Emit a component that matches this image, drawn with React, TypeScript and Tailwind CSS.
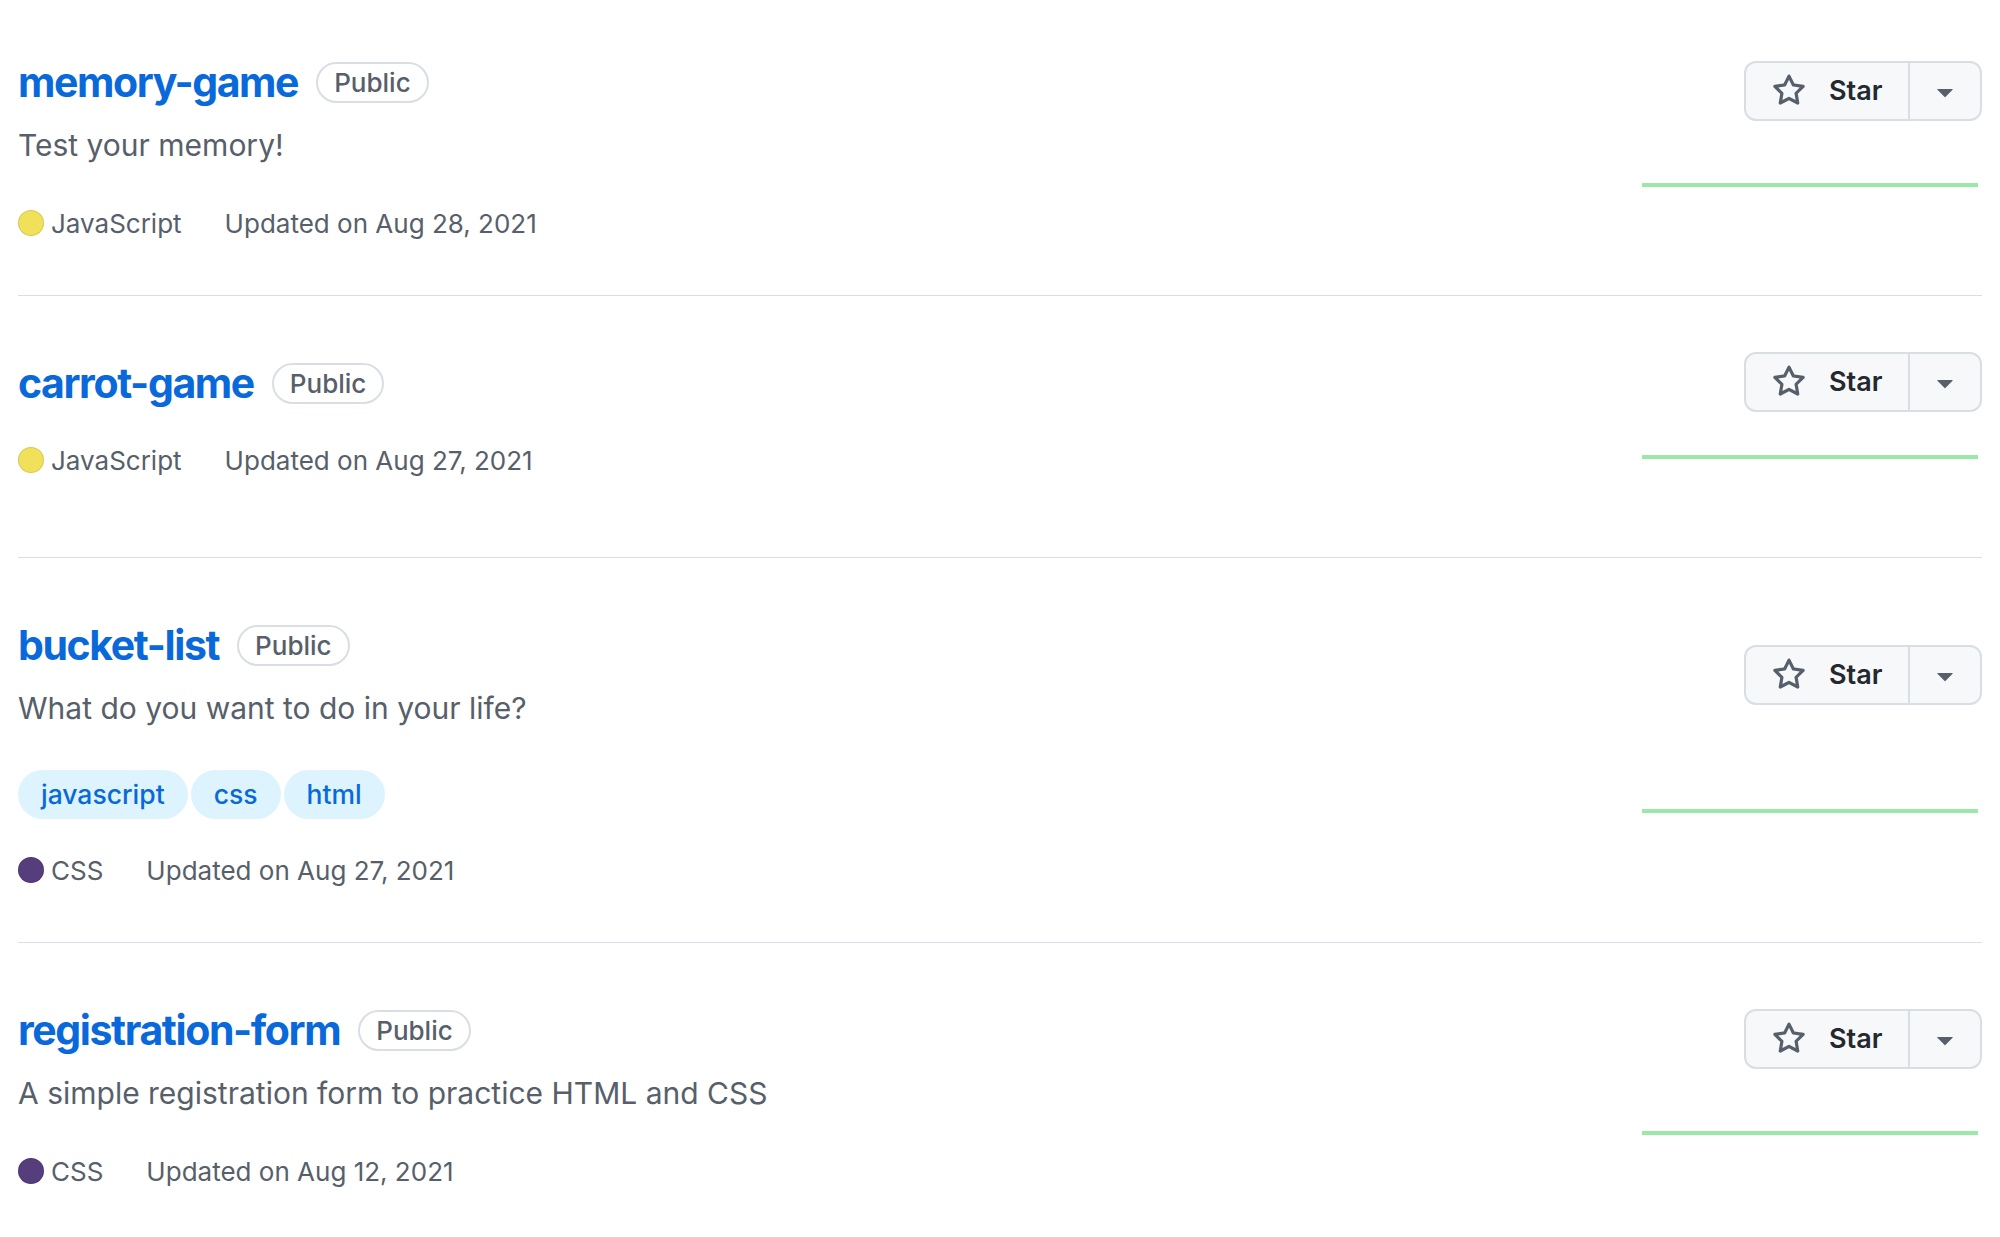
import { ReactNode } from 'react';

type Repo = {
  name: string;
  description?: string;
  topics?: string[];
  language: string;
  langColor: string;
  updated: string;
};

const repos: Repo[] = [
  { name: 'memory-game', description: 'Test your memory!', language: 'JavaScript', langColor: '#f1e05a', updated: 'Aug 28, 2021' },
  { name: 'carrot-game', language: 'JavaScript', langColor: '#f1e05a', updated: 'Aug 27, 2021' },
  { name: 'bucket-list', description: 'What do you want to do in your life?', topics: ['javascript', 'css', 'html'], language: 'CSS', langColor: '#563d7c', updated: 'Aug 27, 2021' },
  { name: 'registration-form', description: 'A simple registration form to practice HTML and CSS', language: 'CSS', langColor: '#563d7c', updated: 'Aug 12, 2021' },
];

function StarIcon() {
  return (
    <svg width="34" height="34" viewBox="0 0 16 16" fill="#57606a">
      <path fillRule="evenodd" d="M8 .25a.75.75 0 01.673.418l1.882 3.815 4.21.612a.75.75 0 01.416 1.279l-3.046 2.97.719 4.192a.75.75 0 01-1.088.791L8 12.347l-3.766 1.98a.75.75 0 01-1.088-.79l.72-4.194L.818 6.374a.75.75 0 01.416-1.28l4.21-.611L7.327.668A.75.75 0 018 .25zm0 2.445L6.615 5.5a.75.75 0 01-.564.41l-3.097.45 2.24 2.184a.75.75 0 01.216.664l-.528 3.084 2.769-1.456a.75.75 0 01.698 0l2.77 1.456-.53-3.084a.75.75 0 01.216-.664l2.24-2.183-3.096-.45a.75.75 0 01-.564-.41L8 2.694v.001z" />
    </svg>
  );
}

function Caret() {
  return (
    <svg width="34" height="34" viewBox="0 0 16 16" fill="#57606a">
      <path d="M4.427 7.427l3.396 3.396a.25.25 0 00.354 0l3.396-3.396A.25.25 0 0011.396 7H4.604a.25.25 0 00-.177.427z" />
    </svg>
  );
}

function Pill({ children }: { children: ReactNode }) {
  return (
    <span className="h-[49px] px-[23px] flex items-center rounded-full bg-[#ddf4ff] text-[#0969da] text-[26.5px] font-medium">{children}</span>
  );
}

function RepoRow({ repo }: { repo: Repo }) {
  return (
    <li className="flex justify-between border-b border-[#d8dee4] py-[52px]">
      <div className="flex flex-col">
        <div className="flex items-center h-[70px]">
          <a className="text-[41px] font-bold text-[#0969da] leading-none tracking-[-1.4px]">{repo.name}</a>
          <span className="ml-[18px] h-[41px] px-[16px] flex items-center rounded-full border-2 border-[#d8dee4] text-[26px] font-medium text-[#57606a]">Public</span>
        </div>
        {repo.description && (
          <p className="mt-[5px] mb-[13px] text-[30px] leading-[46px] text-[#57606a]">{repo.description}</p>
        )}
        {repo.topics && (
          <div className="flex gap-[3px] mt-[26px] mb-[9px]">
            {repo.topics.map((t) => <Pill key={t}>{t}</Pill>)}
          </div>
        )}
        <div className="mt-[22px] h-[40px] flex items-center text-[26px] text-[#57606a]">
          <span className="w-[26px] h-[26px] rounded-full border border-black/10 mr-[7px]" style={{ backgroundColor: repo.langColor }} />
          <span className="mr-[43px]">{repo.language}</span>
          <span>Updated on {repo.updated}</span>
        </div>
      </div>
      <div className="flex flex-col justify-around items-end pt-[4px]">
        <div className="flex h-[60px] rounded-[12px] border-2 border-[#d8dee4] bg-[#f6f8fa] text-[#24292f]">
          <button className="w-[164px] flex items-center pl-[26px] gap-[23px] text-[27px] font-semibold border-r-2 border-[#d8dee4]">
            <StarIcon />
            Star
          </button>
          <button className="w-[70px] flex items-center justify-center">
            <Caret />
          </button>
        </div>
        <div className="h-[93px] pr-[4px]">
          <svg width="336" height="93">
            <line x1="0" y1="45" x2="336" y2="45" stroke="#9be9a8" strokeWidth="4" />
          </svg>
        </div>
      </div>
    </li>
  );
}

export default function App() {
  return (
    <div className="min-h-screen bg-white px-[18px] overflow-hidden" style={{ fontFamily: 'Inter, "Noto Sans", sans-serif' }}>
      <ul className="-mt-[5px]">
        {repos.map((r) => <RepoRow key={r.name} repo={r} />)}
      </ul>
    </div>
  );
}
